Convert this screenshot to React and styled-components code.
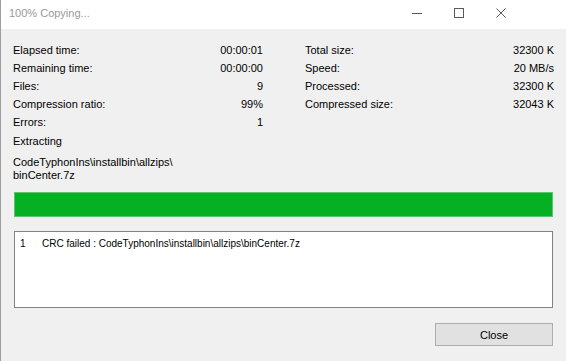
import React from "react";
import styled, { createGlobalStyle } from "styled-components";

const Global = createGlobalStyle`
  html, body {
    margin: 0;
    padding: 0;
    background: #f0f0f0;
  }
  body {
    font-family: "Liberation Sans", Arial, sans-serif;
    font-size: 11px;
    color: #000;
  }
`;

const Window = styled.div`
  width: 566px;
  height: 361px;
  box-sizing: border-box;
  border-left: 1px solid #9e9e9e;
  background: #f0f0f0;
  display: flex;
  flex-direction: column;
  overflow: hidden;
`;

const TitleBar = styled.div`
  height: 29px;
  background: #ffffff;
  display: flex;
  align-items: center;
  justify-content: space-between;
  padding-left: 8px;
`;

const TitleText = styled.div`
  font-size: 11px;
  color: #999999;
  padding-bottom: 3px;
`;

const Controls = styled.div`
  display: flex;
  height: 100%;
  margin-right: 44px;
`;

const CtrlButton = styled.div`
  width: 42px;
  height: 100%;
  display: flex;
  align-items: center;
  justify-content: center;
  padding-bottom: 3px;
  box-sizing: border-box;
`;

const Body = styled.div`
  flex: 1;
  display: flex;
  flex-direction: column;
  padding: 12px 13px 0 12px;
`;

const StatsGrid = styled.div`
  display: grid;
  grid-template-columns: 250px 249px;
  column-gap: 42px;
`;

const Column = styled.div`
  display: flex;
  flex-direction: column;
`;

const StatRow = styled.div`
  height: 18px;
  line-height: 18px;
  display: flex;
  justify-content: space-between;
  white-space: nowrap;
`;

const Status = styled.div`
  height: 18px;
  line-height: 18px;
  margin-top: 1px;
`;

const Path = styled.div`
  line-height: 13px;
  margin-top: 6px;
`;

const Progress = styled.div`
  margin-top: 10px;
  height: 25px;
  box-sizing: border-box;
  border: 1px solid #5cc46c;
  background: #06b025;
  margin-left: 1px;
`;

const Log = styled.div`
  margin-top: 14px;
  margin-left: 1px;
  height: 77px;
  box-sizing: border-box;
  border: 1px solid #828282;
  background: #ffffff;
  padding: 4px 5px;
  font-size: 10px;
`;

const LogLine = styled.div`
  display: flex;
  line-height: 16px;
`;

const LogNum = styled.span`
  width: 22px;
`;

const Footer = styled.div`
  display: flex;
  justify-content: flex-end;
  margin-top: 15px;
`;

const Button = styled.button`
  width: 118px;
  height: 23px;
  box-sizing: border-box;
  border: 1px solid #adadad;
  background: #e1e1e1;
  font-family: "Liberation Sans", Arial, sans-serif;
  font-size: 11px;
  color: #000;
  padding: 0;
`;

const Icon = ({ children }) => (
  <svg width="12" height="12" viewBox="0 0 12 12" fill="none" stroke="#5a5a5a" strokeWidth="1">
    {children}
  </svg>
);

const left = [
  ["Elapsed time:", "00:00:01"],
  ["Remaining time:", "00:00:00"],
  ["Files:", "9"],
  ["Compression ratio:", "99%"],
  ["Errors:", "1"],
];

const right = [
  ["Total size:", "32300 K"],
  ["Speed:", "20 MB/s"],
  ["Processed:", "32300 K"],
  ["Compressed size:", "32043 K"],
];

const App = () => {
  return (
    <Window>
      <Global />
      <TitleBar>
        <TitleText>100% Copying...</TitleText>
        <Controls>
          <CtrlButton>
            <Icon><path d="M1 6.5 H11" /></Icon>
          </CtrlButton>
          <CtrlButton>
            <Icon><rect x="1.5" y="1.5" width="9" height="9" /></Icon>
          </CtrlButton>
          <CtrlButton>
            <Icon><path d="M1.5 1.5 L10.5 10.5 M10.5 1.5 L1.5 10.5" /></Icon>
          </CtrlButton>
        </Controls>
      </TitleBar>
      <Body>
        <StatsGrid>
          <Column>
            {left.map(([k, v]) => (
              <StatRow key={k}><span>{k}</span><span>{v}</span></StatRow>
            ))}
          </Column>
          <Column>
            {right.map(([k, v]) => (
              <StatRow key={k}><span>{k}</span><span>{v}</span></StatRow>
            ))}
          </Column>
        </StatsGrid>
        <Status>Extracting</Status>
        <Path>
          CodeTyphonIns\installbin\allzips\
          <br />
          binCenter.7z
        </Path>
        <Progress />
        <Log>
          <LogLine>
            <LogNum>1</LogNum>
            <span>CRC failed : CodeTyphonIns\installbin\allzips\binCenter.7z</span>
          </LogLine>
        </Log>
        <Footer>
          <Button>Close</Button>
        </Footer>
      </Body>
    </Window>
  );
};

export default App;
